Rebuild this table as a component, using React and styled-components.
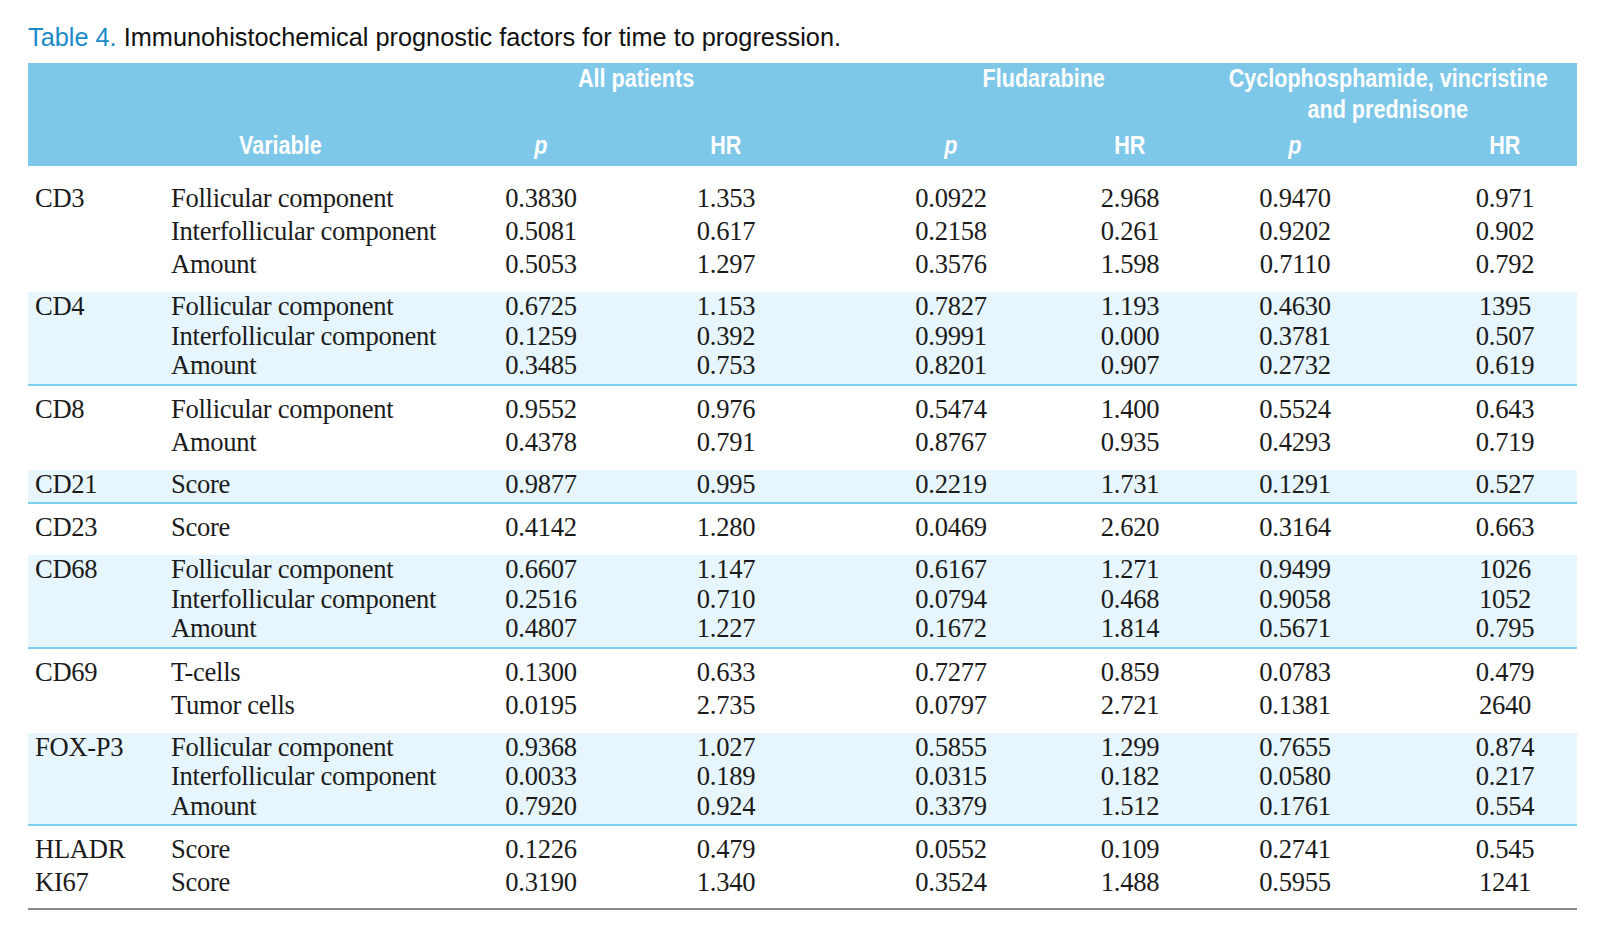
import React from 'react';
import styled, { createGlobalStyle } from 'styled-components';

const GlobalStyle = createGlobalStyle`
    html, body {
        margin: 0;
        padding: 0;
        background: #ffffff;
    }
`;

const COLUMNS = '135px 288px 180px 190px 260px 98px 232px 166px';

const groups = [
    {
        shaded: false,
        rows: [
            ['CD3', 'Follicular component', '0.3830', '1.353', '0.0922', '2.968', '0.9470', '0.971'],
            ['', 'Interfollicular component', '0.5081', '0.617', '0.2158', '0.261', '0.9202', '0.902'],
            ['', 'Amount', '0.5053', '1.297', '0.3576', '1.598', '0.7110', '0.792']
        ]
    },
    {
        shaded: true,
        rows: [
            ['CD4', 'Follicular component', '0.6725', '1.153', '0.7827', '1.193', '0.4630', '1395'],
            ['', 'Interfollicular component', '0.1259', '0.392', '0.9991', '0.000', '0.3781', '0.507'],
            ['', 'Amount', '0.3485', '0.753', '0.8201', '0.907', '0.2732', '0.619']
        ]
    },
    {
        shaded: false,
        rows: [
            ['CD8', 'Follicular component', '0.9552', '0.976', '0.5474', '1.400', '0.5524', '0.643'],
            ['', 'Amount', '0.4378', '0.791', '0.8767', '0.935', '0.4293', '0.719']
        ]
    },
    {
        shaded: true,
        rows: [
            ['CD21', 'Score', '0.9877', '0.995', '0.2219', '1.731', '0.1291', '0.527']
        ]
    },
    {
        shaded: false,
        rows: [
            ['CD23', 'Score', '0.4142', '1.280', '0.0469', '2.620', '0.3164', '0.663']
        ]
    },
    {
        shaded: true,
        rows: [
            ['CD68', 'Follicular component', '0.6607', '1.147', '0.6167', '1.271', '0.9499', '1026'],
            ['', 'Interfollicular component', '0.2516', '0.710', '0.0794', '0.468', '0.9058', '1052'],
            ['', 'Amount', '0.4807', '1.227', '0.1672', '1.814', '0.5671', '0.795']
        ]
    },
    {
        shaded: false,
        rows: [
            ['CD69', 'T-cells', '0.1300', '0.633', '0.7277', '0.859', '0.0783', '0.479'],
            ['', 'Tumor cells', '0.0195', '2.735', '0.0797', '2.721', '0.1381', '2640']
        ]
    },
    {
        shaded: true,
        rows: [
            ['FOX-P3', 'Follicular component', '0.9368', '1.027', '0.5855', '1.299', '0.7655', '0.874'],
            ['', 'Interfollicular component', '0.0033', '0.189', '0.0315', '0.182', '0.0580', '0.217'],
            ['', 'Amount', '0.7920', '0.924', '0.3379', '1.512', '0.1761', '0.554']
        ]
    },
    {
        shaded: false,
        last: true,
        rows: [
            ['HLADR', 'Score', '0.1226', '0.479', '0.0552', '0.109', '0.2741', '0.545'],
            ['KI67', 'Score', '0.3190', '1.340', '0.3524', '1.488', '0.5955', '1241']
        ]
    }
];

export default function App () {
    return (
        <Page>
            <GlobalStyle/>
            <Caption>
                <Narrow $x={0.955} $origin='left'>
                    <CaptionLabel>Table 4.</CaptionLabel> Immunohistochemical prognostic factors for time to progression.
                </Narrow>
            </Caption>
            <Table>
                <HeadBand>
                    <GroupHead $start={3} $shift={0}><Narrow $x={0.83}>All patients</Narrow></GroupHead>
                    <GroupHead $start={5} $shift={88}><Narrow $x={0.83}>Fludarabine</Narrow></GroupHead>
                    <GroupHead $start={7} $shift={20}>
                        <Narrow $x={0.83}>Cyclophosphamide, vincristine</Narrow>
                        <Narrow $x={0.83}>and prednisone</Narrow>
                    </GroupHead>
                    <VariableHead><Narrow $x={0.83} $origin='left'>Variable</Narrow></VariableHead>
                    <ColHead $col={3}><Narrow $x={0.83}><i>p</i></Narrow></ColHead>
                    <ColHead $col={4}><Narrow $x={0.83}>HR</Narrow></ColHead>
                    <ColHead $col={5}><Narrow $x={0.83}><i>p</i></Narrow></ColHead>
                    <ColHead $col={6}><Narrow $x={0.83}>HR</Narrow></ColHead>
                    <ColHead $col={7}><Narrow $x={0.83}><i>p</i></Narrow></ColHead>
                    <ColHead $col={8} $shift={22}><Narrow $x={0.83}>HR</Narrow></ColHead>
                </HeadBand>
                {groups.map((group, gi) => (
                    <Group key={gi} $shaded={group.shaded} $last={group.last} $first={gi === 0}>
                        {group.rows.map((row, ri) => (
                            <Row key={ri} $shaded={group.shaded}>
                                <Marker>{row[0]}</Marker>
                                <VarName>{row[1]}</VarName>
                                {row.slice(2).map((value, vi) => (
                                    <Value key={vi} $shift={vi === 5 ? 22 : 0}>{value}</Value>
                                ))}
                            </Row>
                        ))}
                    </Group>
                ))}
            </Table>
        </Page>
    );
}

const Page = styled.div`
    padding: 22px 25px 30px 28px;
    width: 1549px;
    font-family: "Liberation Serif", "Times New Roman", serif;
    color: #1b1b1b;
`;

// condensed sans is not installed, so squeeze the regular one
const Narrow = styled.span`
    display: inline-block;
    white-space: nowrap;
    transform: scaleX(${props => props.$x});
    transform-origin: ${props => props.$origin || 'center'} center;
`;

const Caption = styled.div`
    font-family: "Liberation Sans", Arial, sans-serif;
    font-size: 26.5px;
    line-height: 31px;
    color: #111111;
    margin-bottom: 10px;
    white-space: nowrap;
`;

const CaptionLabel = styled.span`
    color: #1a8bc7;
`;

const Table = styled.div`
    display: flex;
    flex-direction: column;
`;

const HeadBand = styled.div`
    display: grid;
    grid-template-columns: ${COLUMNS};
    grid-template-rows: 64px 39px;
    background: #7dc7e9;
    color: #ffffff;
    font-family: "Liberation Sans", Arial, sans-serif;
    font-weight: bold;
    font-size: 26px;
    line-height: 31px;
`;

const GroupHead = styled.div`
    grid-row: 1;
    grid-column: ${props => props.$start} / span 2;
    display: flex;
    flex-direction: column;
    align-items: center;
    padding-left: ${props => props.$shift}px;
`;

const VariableHead = styled.div`
    grid-row: 2;
    grid-column: 2;
    padding: 3px 0 0 76px;
`;

const ColHead = styled.div`
    grid-row: 2;
    grid-column: ${props => props.$col};
    text-align: center;
    padding-top: 3px;
    padding-left: ${props => props.$shift || 0}px;
`;

const Group = styled.div`
    display: flex;
    flex-direction: column;
    margin-top: ${props => props.$first ? 9 : 0}px;
    padding: ${props => props.$shaded ? '0 0 3px' : (props.$last ? '7px 0 9px' : '7px 0 11px')};
    background: ${props => props.$shaded ? '#e7f5fc' : 'transparent'};
    border-bottom: ${props => props.$shaded ? '2px solid #7ccfee' : (props.$last ? '2px solid #8a8a8a' : 'none')};
`;

const Row = styled.div`
    display: grid;
    grid-template-columns: ${COLUMNS};
    height: ${props => props.$shaded ? 29.5 : 33}px;
    align-items: center;
    font-size: 26.6px;
    letter-spacing: -0.3px;
    line-height: 1;
`;

const Marker = styled.div`
    padding-left: 7px;
    white-space: nowrap;
`;

const VarName = styled.div`
    padding-left: 8px;
    white-space: nowrap;
`;

const Value = styled.div`
    text-align: center;
    padding-left: ${props => props.$shift}px;
`;
